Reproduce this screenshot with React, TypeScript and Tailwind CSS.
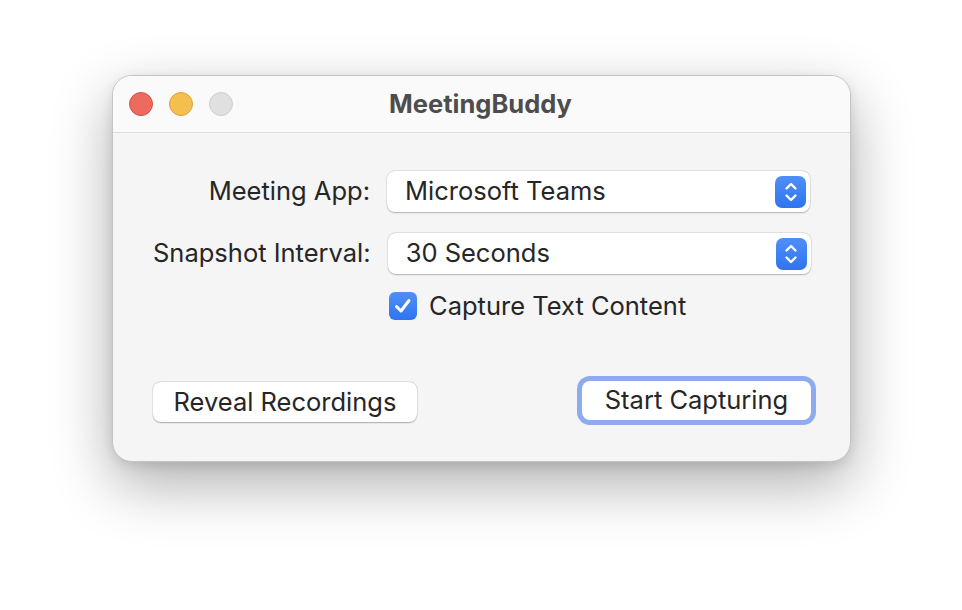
import React from "react";

function Stepper() {
  return (
    <div className="w-[31px] h-[32px] rounded-[7px] bg-gradient-to-b from-[#4f8ff7] to-[#2f74f0] flex items-center justify-center">
      <svg width="16" height="24" viewBox="0 0 16 24" fill="none" stroke="white" strokeWidth="2.4" strokeLinecap="round" strokeLinejoin="round">
        <path d="M3.5 8.5 L8 4 L12.5 8.5" />
        <path d="M3.5 15.5 L8 20 L12.5 15.5" />
      </svg>
    </div>
  );
}

function Select({ value }: { value: string }) {
  return (
    <div className="w-[423px] h-[41px] rounded-[8px] bg-white shadow-[0_0.5px_1.5px_rgba(0,0,0,0.25),0_0_0_0.5px_rgba(0,0,0,0.08)] flex items-center justify-between pl-[18px] pr-[4px]">
      <span className="text-[25.5px] text-[#262626]">{value}</span>
      <Stepper />
    </div>
  );
}

export default function App() {
  return (
    <div className="w-[962px] h-[610px] bg-white flex justify-center pt-[75px] pl-[1px]" style={{ fontFamily: "Inter, 'Noto Sans', sans-serif" }}>
      <div className="w-[739px] h-[387px] rounded-[20px] border border-[#c4c4c4] bg-[#f5f5f5] shadow-[0_22px_60px_rgba(0,0,0,0.32),0_4px_12px_rgba(0,0,0,0.1)] flex flex-col overflow-hidden">
        <div className="h-[57px] shrink-0 bg-[#fafafa] border-b border-[#dcdcdc] flex items-center relative">
          <div className="flex items-center gap-[16px] pl-[16px]">
            <div className="w-[24px] h-[24px] rounded-full bg-[#ec6a5e] border border-[#d25548]" />
            <div className="w-[24px] h-[24px] rounded-full bg-[#f5bf4f] border border-[#d9a23b]" />
            <div className="w-[24px] h-[24px] rounded-full bg-[#e0e0e0] border border-[#cdcdcd]" />
          </div>
          <div className="absolute inset-0 flex items-center justify-center pr-[2px] text-[25.5px] font-bold text-[#4d4d4d]">
            MeetingBuddy
          </div>
        </div>
        <div className="flex-1 flex flex-col px-[40px] pt-[38px]">
          <div className="flex items-center">
            <div className="w-[218px] text-right text-[25.5px] text-[#262626] whitespace-nowrap">Meeting App:</div>
            <div className="ml-[17px]"><Select value="Microsoft Teams" /></div>
          </div>
          <div className="flex items-center mt-[21px]">
            <div className="w-[218px] text-right text-[25.5px] text-[#262626] whitespace-nowrap">Snapshot Interval:</div>
            <div className="ml-[17px]"><Select value="30 Seconds" /></div>
          </div>
          <div className="flex items-center h-[28px] mt-[18px] ml-[236px]">
            <div className="w-[28px] h-[28px] rounded-[6px] bg-gradient-to-b from-[#4f8ff7] to-[#2f74f0] flex items-center justify-center">
              <svg width="20" height="20" viewBox="0 0 20 20" fill="none" stroke="white" strokeWidth="3" strokeLinecap="round" strokeLinejoin="round">
                <path d="M3.5 10.5 L8 15 L16 4.5" />
              </svg>
            </div>
            <span className="ml-[12px] text-[25.5px] leading-[28px] text-[#262626]">Capture Text Content</span>
          </div>
          <div className="flex items-start justify-between mt-[56px]">
            <div className="mt-[6px] w-[264px] h-[40px] rounded-[8px] bg-white shadow-[0_0.5px_1.5px_rgba(0,0,0,0.28),0_0_0_0.5px_rgba(0,0,0,0.08)] flex items-center justify-center text-[25.5px] text-[#262626]">
              Reveal Recordings
            </div>
            <div className="mr-[-6px] p-[5px] rounded-[13px] bg-[#8eabf0]">
              <div className="w-[229px] h-[39px] rounded-[8px] bg-white flex items-center justify-center text-[25.5px] text-[#262626]">
                Start Capturing
              </div>
            </div>
          </div>
        </div>
      </div>
    </div>
  );
}
